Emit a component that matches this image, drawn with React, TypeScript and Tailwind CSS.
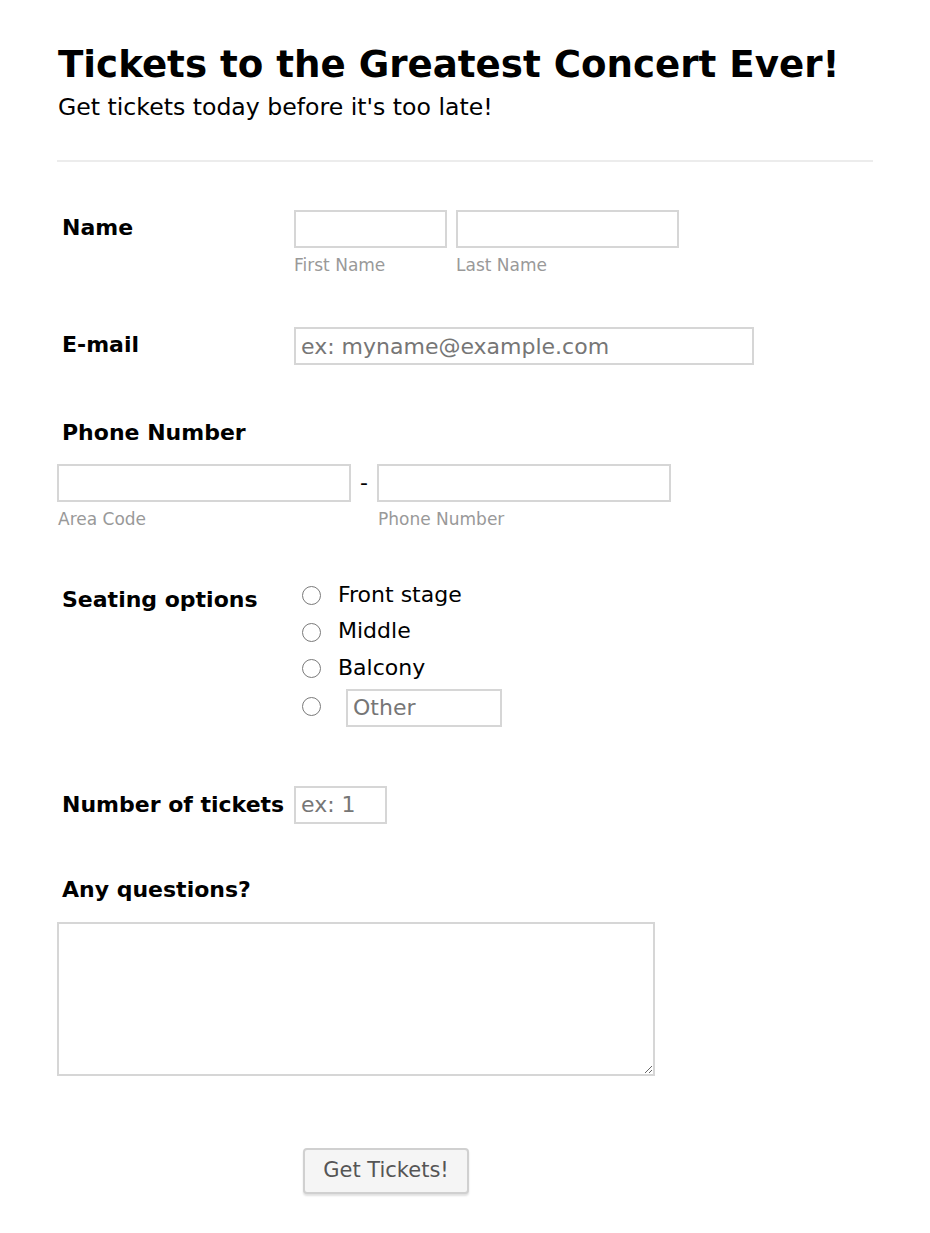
import React from 'react';

const font = { fontFamily: '"DejaVu Sans", Verdana, sans-serif' };

const inputCls =
  'h-[38px] border-2 border-[#d6d6d6] bg-white px-[5px] text-[22px] text-black placeholder:text-[#767676] outline-none';

const Label: React.FC<{ children: React.ReactNode; className?: string }> = ({ children, className }) => (
  <div className={`w-[237px] shrink-0 pl-[5px] text-[22px] leading-[27px] font-bold text-black ${className ?? ''}`}>
    {children}
  </div>
);

const Sub: React.FC<{ children: React.ReactNode; className?: string }> = ({ children, className }) => (
  <div className={`mt-[7px] text-[17px] leading-[20px] text-[#999999] ${className ?? ''}`}>{children}</div>
);

const Radio: React.FC = () => (
  <span className="inline-block h-[19px] w-[19px] shrink-0 rounded-full border border-[#7a7a7a] bg-white" />
);

export default function App() {
  return (
    <div className="min-h-[1233px] bg-white" style={font}>
      <div className="ml-[57px] w-[816px] pt-[41px] pb-[40px]">
        <h1 className="pl-[1px] text-[37.2px] leading-[46px] font-bold text-black">
          Tickets to the Greatest Concert Ever!
        </h1>
        <p className="mt-[6px] pl-[1px] text-[23.6px] leading-[28px] text-black">
          Get tickets today before it's too late!
        </p>
        <div className="mt-[39px] h-[2px] bg-[#ececec]" />

        {/* Name */}
        <div className="mt-[48px] flex">
          <Label className="pt-[4px]">Name</Label>
          <div className="flex gap-[9px]">
            <div>
              <input className={`${inputCls} w-[153px]`} />
              <Sub>First Name</Sub>
            </div>
            <div>
              <input className={`${inputCls} w-[223px]`} />
              <Sub>Last Name</Sub>
            </div>
          </div>
        </div>

        {/* E-mail */}
        <div className="mt-[52px] flex">
          <Label className="pt-[4px]">E-mail</Label>
          <input className={`${inputCls} w-[460px]`} placeholder="ex: myname@example.com" />
        </div>

        {/* Phone */}
        <div className="mt-[54px]">
          <Label>Phone Number</Label>
          <div className="mt-[18px] flex">
            <div>
              <input className={`${inputCls} w-[294px]`} />
              <Sub className="pl-[1px]">Area Code</Sub>
            </div>
            <span className="w-[26px] pt-[5px] text-center text-[22px] leading-[27px] text-black">-</span>
            <div>
              <input className={`${inputCls} w-[294px]`} />
              <Sub className="pl-[1px]">Phone Number</Sub>
            </div>
          </div>
        </div>

        {/* Seating */}
        <div className="mt-[47px] flex">
          <Label className="pt-[10px]">Seating options</Label>
          <div className="flex flex-col pl-[8px] pt-[3px]">
            {['Front stage', 'Middle', 'Balcony'].map((o) => (
              <label key={o} className="flex h-[36.5px] items-center gap-[17px] text-[22px] text-black">
                <span className="-mt-[3px] flex"><Radio /></span>
                <span className="-mt-[6px]">{o}</span>
              </label>
            ))}
            <div className="flex items-start gap-[25px]">
              <span className="mt-[8px] flex"><Radio /></span>
              <input className={`${inputCls} w-[156px]`} placeholder="Other" />
            </div>
          </div>
        </div>

        {/* Number of tickets */}
        <div className="mt-[59px] flex">
          <Label className="pt-[5px]">Number of tickets</Label>
          <input className={`${inputCls} w-[93px]`} placeholder="ex: 1" />
        </div>

        {/* Questions */}
        <div className="mt-[52px]">
          <Label>Any questions?</Label>
          <textarea className="mt-[19px] block h-[154px] w-[598px] resize border-2 border-[#d6d6d6] bg-white p-[5px] text-[22px] outline-none" />
        </div>

        <div className="mt-[72px] pl-[246px]">
          <button className="h-[46px] w-[166px] rounded-[4px] border-2 border-[#d0d0d0] bg-[#f5f5f5] text-[21px] text-[#555555] shadow-[0_2px_2px_rgba(0,0,0,0.12)]">
            Get Tickets!
          </button>
        </div>
      </div>
    </div>
  );
}
